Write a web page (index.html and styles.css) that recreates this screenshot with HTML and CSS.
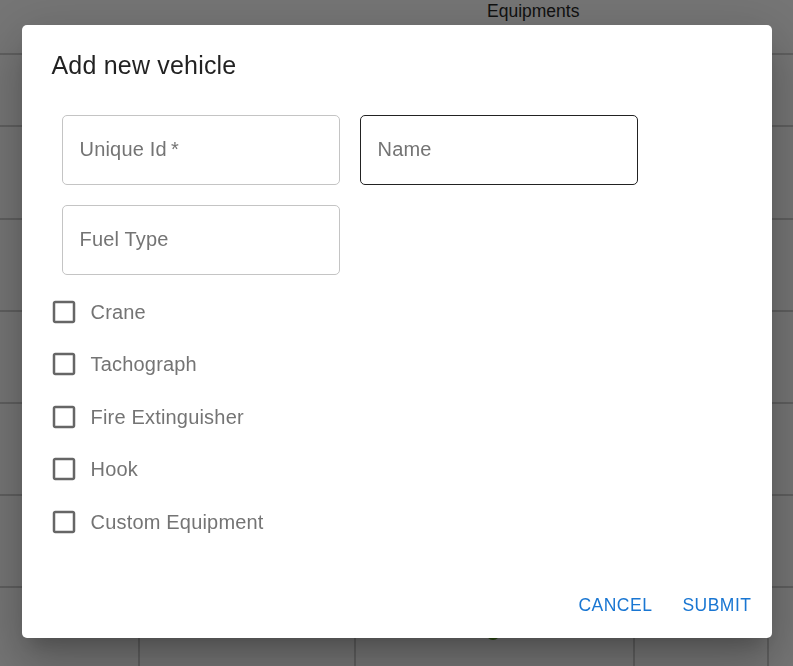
FILE: index.html
```html
<!DOCTYPE html>
<html lang="en">
<head>
<meta charset="utf-8">
<title>Add new vehicle</title>
<link rel="stylesheet" href="styles.css">
</head>
<body>
<div class="sheet">
  <div class="head"><span class="head-label">Equipments</span></div>
  <div class="row r1"></div>
  <div class="row r2"></div>
  <div class="row r3"></div>
  <div class="row r3"></div>
  <div class="row r3"></div>
  <div class="row r3"></div>
  <div class="row last">
    <div class="cell"></div>
    <div class="cell"></div>
    <div class="cell"><span class="dot"></span></div>
    <div class="cell"></div>
    <div class="cell end"></div>
  </div>
</div>

<div class="modal">
  <div class="dialog" role="dialog">
    <h2 class="title">Add new vehicle</h2>
    <div class="content">
      <div class="fields">
        <div class="field"><span class="label">Unique Id&thinsp;*</span></div>
        <div class="field hover"><span class="label">Name</span></div>
        <div class="field"><span class="label">Fuel Type</span></div>
      </div>
      <div class="checks">
        <label class="check"><span class="box"><svg viewBox="0 0 24 24"><path d="M19 5v14H5V5h14m0-2H5c-1.11 0-2 .9-2 2v14c0 1.1.89 2 2 2h14c1.1 0 2-.9 2-2V5c0-1.1-.9-2-2-2z"/></svg></span><span class="check-label">Crane</span></label>
        <label class="check"><span class="box"><svg viewBox="0 0 24 24"><path d="M19 5v14H5V5h14m0-2H5c-1.11 0-2 .9-2 2v14c0 1.1.89 2 2 2h14c1.1 0 2-.9 2-2V5c0-1.1-.9-2-2-2z"/></svg></span><span class="check-label">Tachograph</span></label>
        <label class="check"><span class="box"><svg viewBox="0 0 24 24"><path d="M19 5v14H5V5h14m0-2H5c-1.11 0-2 .9-2 2v14c0 1.1.89 2 2 2h14c1.1 0 2-.9 2-2V5c0-1.1-.9-2-2-2z"/></svg></span><span class="check-label">Fire Extinguisher</span></label>
        <label class="check"><span class="box"><svg viewBox="0 0 24 24"><path d="M19 5v14H5V5h14m0-2H5c-1.11 0-2 .9-2 2v14c0 1.1.89 2 2 2h14c1.1 0 2-.9 2-2V5c0-1.1-.9-2-2-2z"/></svg></span><span class="check-label">Hook</span></label>
        <label class="check"><span class="box"><svg viewBox="0 0 24 24"><path d="M19 5v14H5V5h14m0-2H5c-1.11 0-2 .9-2 2v14c0 1.1.89 2 2 2h14c1.1 0 2-.9 2-2V5c0-1.1-.9-2-2-2z"/></svg></span><span class="check-label">Custom Equipment</span></label>
      </div>
    </div>
    <div class="actions">
      <button class="btn" type="button">Cancel</button>
      <button class="btn" type="button">Submit</button>
    </div>
  </div>
</div>
</body>
</html>
```

FILE: styles.css
```css
* { box-sizing: border-box; }

html, body {
  margin: 0;
  padding: 0;
}

body {
  width: 793px;
  height: 666px;
  overflow: hidden;
  background: #767676;
  font-family: "Liberation Sans", Arial, sans-serif;
}

.sheet {
  display: flex;
  flex-direction: column;
}

.head {
  height: 55px;
  border-bottom: 2px solid #606060;
}

.head-label {
  display: block;
  padding-left: 487px;
  font-size: 17.5px;
  line-height: 22px;
  color: #111;
}

.row {
  border-bottom: 2px solid #606060;
}

.r1 { height: 72px; }
.r2 { height: 93px; }
.r3 { height: 92px; }

.last {
  height: 90px;
  border-bottom: none;
  display: grid;
  grid-template-columns: 140px 216px 279px 134px 24px;
}

.cell {
  border-right: 2px solid #606060;
}

.cell.end { border-right: none; }

.dot {
  display: block;
  width: 14px;
  height: 14px;
  margin: 38px 0 0 130px;
  border-radius: 50%;
  background: #2c4a12;
}

.modal {
  position: fixed;
  inset: 0;
  display: flex;
  justify-content: center;
  align-items: flex-start;
  padding-top: 25px;
}

.dialog {
  width: 750px;
  background: #fff;
  border-radius: 5px;
  box-shadow:
    0 14px 19px -9px rgba(0, 0, 0, 0.2),
    0 30px 47px 4px rgba(0, 0, 0, 0.14),
    0 11px 57px 10px rgba(0, 0, 0, 0.12);
}

.title {
  margin: 0;
  padding: 20px 30px;
  font-size: 25px;
  line-height: 40px;
  font-weight: 400;
  letter-spacing: 0.19px;
  color: rgba(0, 0, 0, 0.87);
}

.content {
  padding: 0 30px 25px;
}

.fields {
  display: flex;
  flex-wrap: wrap;
}

.field {
  width: 278px;
  height: 70px;
  margin: 10px;
  border: 1px solid #c4c4c4;
  border-radius: 5px;
  display: flex;
  align-items: center;
  padding-left: 17px;
  padding-bottom: 2px;
}

.field.hover { border-color: #222; }

.label {
  font-size: 20px;
  line-height: 24px;
  letter-spacing: 0.19px;
  color: #747474;
}

.checks {
  display: flex;
  flex-direction: column;
}

.check {
  height: 52.5px;
  display: flex;
  align-items: center;
  margin-left: -13.5px;
  padding-top: 1px;
}

.box {
  width: 52.5px;
  height: 52.5px;
  display: flex;
  align-items: center;
  justify-content: center;
}

.box svg {
  width: 30px;
  height: 30px;
  fill: #666;
}

.check-label {
  font-size: 20px;
  line-height: 24px;
  letter-spacing: 0.19px;
  color: #747474;
}

.actions {
  display: flex;
  justify-content: flex-end;
  gap: 10px;
  padding: 10px;
}

.btn {
  height: 45px;
  min-width: 80px;
  padding: 0 10px;
  border: none;
  background: transparent;
  font-family: "Liberation Sans", Arial, sans-serif;
  font-size: 17.5px;
  letter-spacing: 0.5px;
  text-transform: uppercase;
  color: #1976d2;
  cursor: pointer;
}
```
